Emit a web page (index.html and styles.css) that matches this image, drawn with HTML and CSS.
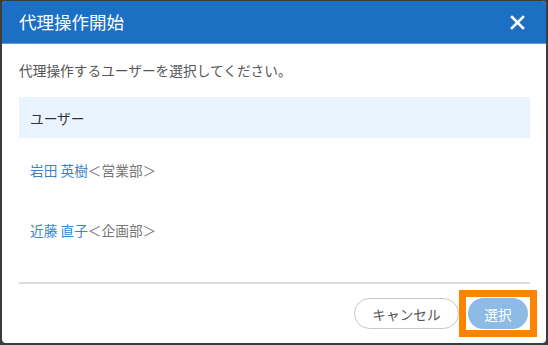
FILE: index.html
```html
<!DOCTYPE html>
<html lang="ja">
<head>
<meta charset="utf-8">
<link rel="stylesheet" href="styles.css">
</head>
<body>
<div class="dialog">
  <div class="header">
    <span class="title">代理操作開始</span>
    <svg class="close" width="15" height="15" viewBox="0 0 15 15"><path d="M2 2L13 13M13 2L2 13" stroke="#fff" stroke-width="2.6" stroke-linecap="square"/></svg>
  </div>
  <div class="body">
    <p class="lead">代理操作するユーザーを選択してください。</p>
    <div class="thead">ユーザー</div>
    <div class="row"><span class="name">岩田 英樹</span><span class="dept">＜営業部＞</span></div>
    <div class="row"><span class="name">近藤 直子</span><span class="dept">＜企画部＞</span></div>
    <div class="spacer"></div>
  </div>
  <div class="footer">
    <button class="btn cancel">キャンセル</button>
    <span class="highlight"><button class="btn select">選択</button></span>
  </div>
</div>
</body>
</html>
```
FILE: styles.css
```css
html, body {
  margin: 0;
  padding: 0;
}
body {
  background: #3c3c3c;
  font-family: "Noto Sans CJK JP", "Noto Sans", sans-serif;
  padding: 1px 2px 2px 2px;
  box-sizing: border-box;
  height: 345px;
  overflow: hidden;
}
.dialog {
  background: #fff;
  height: 342px;
  border-radius: 4px;
  overflow: hidden;
  display: flex;
  flex-direction: column;
}
.header {
  background: #1b70c4;
  height: 42px;
  border-bottom: 1px solid #5a9be0;
  display: flex;
  align-items: center;
  justify-content: space-between;
  padding: 0 21px 0 17px;
}
.title {
  color: #fff;
  font-size: 17.5px;
  line-height: 22px;
}
.close {
  display: block;
}
.body {
  padding: 0 16px 0 17px;
  flex: 1;
  display: flex;
  flex-direction: column;
}
.lead {
  margin: 16px 0 0 0;
  font-size: 13.7px;
  line-height: 20px;
  color: #555;
}
.thead {
  margin-top: 17px;
  height: 41px;
  background: #e9f4fe;
  display: flex;
  align-items: center;
  padding-left: 11px;
  font-size: 13.7px;
  color: #333;
}
.row {
  height: 60px;
  display: flex;
  align-items: center;
  padding: 3px 0 0 11px;
  box-sizing: border-box;
  font-size: 13.7px;
}
.name {
  color: #3a85d0;
}
.dept {
  color: #777;
}
.spacer {
  flex: 1;
  border-bottom: 2px solid #dcdce0;
}
.footer {
  height: 59px;
  display: flex;
  justify-content: flex-end;
  align-items: center;
  padding: 0 9px 0 0;
}
.btn {
  height: 31px;
  border-radius: 16px;
  font-family: "Noto Sans CJK JP", "Noto Sans", sans-serif;
  font-size: 13.7px;
  padding: 0;
  display: block;
}
.cancel {
  width: 105px;
  background: #fff;
  border: 1px solid #c8c8c8;
  color: #555;
}
.highlight {
  display: block;
  border: 7px solid #ff8200;
  padding: 1px 2px;
  background: #fff;
}
.select {
  width: 60px;
  background: #8cbbe6;
  border: none;
  color: #fff;
}
```
